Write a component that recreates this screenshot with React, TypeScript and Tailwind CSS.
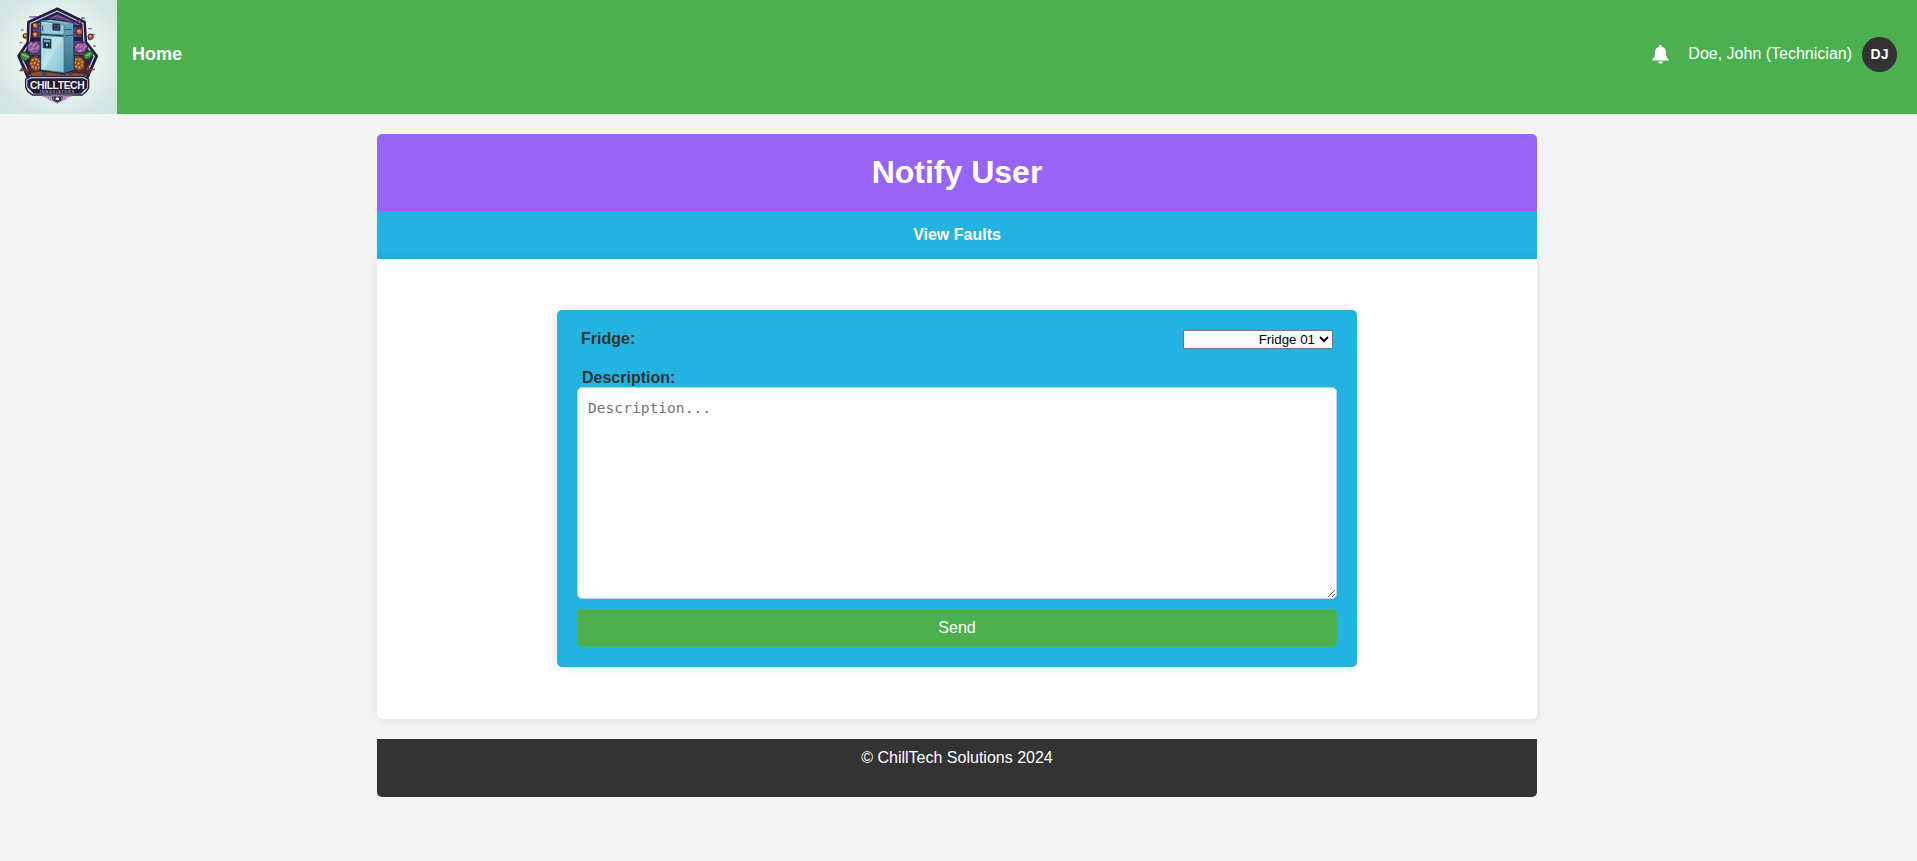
function Logo() {
  return (
    <svg viewBox="0 0 351 342" className="h-[114px] w-[117px] shrink-0" role="img">
      <defs>
        <radialGradient id="glow" cx="50%" cy="48%" r="68%">
          <stop offset="0" stopColor="#f5faf8" />
          <stop offset="0.55" stopColor="#e4f1ed" />
          <stop offset="0.85" stopColor="#d3e6e2" />
          <stop offset="1" stopColor="#cfe3df" />
        </radialGradient>
        <linearGradient id="door" x1="0" y1="0" x2="1" y2="1">
          <stop offset="0" stopColor="#a5d6de" />
          <stop offset="0.5" stopColor="#a9dae1" />
          <stop offset="1" stopColor="#83bfce" />
        </linearGradient>
        <linearGradient id="side" x1="0" y1="0" x2="0" y2="1">
          <stop offset="0" stopColor="#6ba6b9" />
          <stop offset="1" stopColor="#386d87" />
        </linearGradient>
      </defs>
      <rect width="351" height="342" fill="url(#glow)" />
      <g fill="#8c72a4">
        <path d="M88 48h22v5H88zM95 57h9v4h-9zM63 88h8v4h-8zM70 102h8v4h-8zM59 126h8v4h-8zM243 52h12v5h-12zM264 84h12v4h-12zM273 102h12v4h-12zM263 117h10v4h-10zM279 136h8v5h-8z" />
      </g>
      <path d="M172 25L255 65L259 125L292 168L262 237H84L54 168L82 127L84 65Z" fill="#271f43" stroke="#211b3b" strokeWidth="5" strokeLinejoin="round" />
      <path d="M172 33L249 70L252 128L283 169L256 230H91L63 169L89 129L91 70Z" fill="#2d2147" stroke="#b4c4d7" strokeWidth="4" />
      <path d="M172 43L242 75L244 130L260 165H88L99 130V77Z" fill="#634083" />
      <path d="M101 79L172 47L240 77" fill="none" stroke="#8d66a9" strokeWidth="3" />
      <path d="M93 112h31v12H89zM219 111h29v12h-29zM219 76h24v6h-24z" fill="#271b45" />
      <g fill="#bc6b2e" stroke="#321a35" strokeWidth="3">
        <circle cx="106" cy="77" r="9" /><circle cx="106" cy="104" r="9" />
        <circle cx="76" cy="108" r="7" /><circle cx="238" cy="65" r="6" />
        <circle cx="238" cy="95" r="10" /><circle cx="272" cy="110" r="8" />
      </g>
      <g fill="#f0a142">
        <circle cx="104" cy="75" r="4" /><circle cx="104" cy="102" r="4" />
        <circle cx="75" cy="106" r="3" /><circle cx="236" cy="93" r="4" /><circle cx="271" cy="108" r="3" />
      </g>
      <g fill="#8f5798" stroke="#3d2450" strokeWidth="3">
        <path d="M82 136l9-12 10 3 9-5 9 10 4 13-8 14-18 3-15-10zM222 139l12-13 10 3 12-3 7 14-6 14-16 7-19-8z" />
      </g>
      <path d="M88 136l7-6M99 140l6-8M108 146l9-7M91 149l9-4M228 141l8-6M240 143l6-8M250 145l8-8M235 154l11-4" stroke="#c286bf" strokeWidth="4" strokeLinecap="round" />
      <path d="M60 158q18-6 31 11q-13 22-27 6zM86 177q15-4 25-13l7 13-15 13zM222 165q17 2 23 15h-20zM250 166q13-18 31-9q-6 21-27 22z" fill="#3d8f3f" stroke="#183a2d" strokeWidth="3" />
      <path d="M66 163l21 9M228 169l11 7M257 168l14-7" stroke="#99c751" strokeWidth="4" />
      <path d="M76 211l18-11 30-3v29H80zM219 204l30-7 28 13-14 17h-45z" fill="#4d253b" />
      <g fill="#8d4d2b" stroke="#512b2a" strokeWidth="3">
        <path d="M103 169l15 4 9 16-4 17-14 9-15-7-7-15 6-19zM231 169l15 2 9 14-2 20-13 9-14-5-8-15 3-18z" />
      </g>
      <g fill="#dc8f3a">
        <circle cx="98" cy="180" r="3.500" /><circle cx="108" cy="178" r="3.500" /><circle cx="117" cy="184" r="3.500" />
        <circle cx="94" cy="190" r="3.500" /><circle cx="104" cy="189" r="3.500" /><circle cx="114" cy="194" r="3.500" />
        <circle cx="98" cy="200" r="3.500" /><circle cx="108" cy="203" r="3.500" /><circle cx="117" cy="203" r="3" />
        <circle cx="229" cy="178" r="3.500" /><circle cx="239" cy="179" r="3.500" /><circle cx="247" cy="186" r="3.500" />
        <circle cx="226" cy="188" r="3.500" /><circle cx="236" cy="190" r="3.500" /><circle cx="246" cy="196" r="3.500" />
        <circle cx="228" cy="199" r="3.500" /><circle cx="238" cy="202" r="3.500" />
      </g>
      <path d="M70 201l-8 10h25M266 195l-5 13h23" fill="none" stroke="#804222" strokeWidth="5" />
      <path d="M90 218L132 211L213 217L255 221L246 233H98Z" fill="#8c4c32" stroke="#48273c" strokeWidth="3" />
      <path d="M128 214v10h10v-8M184 219v12h11v-11M208 216v8h8v-10" fill="#2d5c73" stroke="#1b304e" strokeWidth="2" />
      <path d="M122 63L153 57L220 68L222 211L190 221L121 212Z" fill="#203853" stroke="#1c2747" strokeWidth="4" strokeLinejoin="round" />
      <path d="M191 73L220 69L221 210L191 219Z" fill="url(#side)" />
      <path d="M124 62L153 59L219 69L192 74Z" fill="#80b7c6" />
      <path d="M123 64L192 73V105L123 101Z" fill="#96cbd5" stroke="#3c7189" strokeWidth="2" />
      <path d="M123 106L192 110V218L123 209Z" fill="url(#door)" stroke="#3c7189" strokeWidth="2" />
      <path d="M161 110L187 112L134 208L125 207V183Z" fill="#c3e8eb" opacity="0.65" />
      <path d="M125 67l57 8M127 108v98" stroke="#c7e9ed" strokeWidth="3" />
      <path d="M157 70l24 2v21l-24-2z" fill="#223049" />
      <path d="M162 75h5v5h-5zM171 76h6v5h-6zM162 84h15v3h-15z" fill="#485b6c" />
      <path d="M128 115l26 2v29l-26-2z" fill="#243f5c" />
      <path d="M132 119l18 1v7l-18-1z" fill="#6ca7b9" />
      <path d="M135 130h12l3 13-17-1z" fill="#102942" />
      <path d="M138 131h6v8h-6z" fill="#8cc4d1" />
      <path d="M128 76v18M194 89h22M195 108l24-3" stroke="#2c526c" strokeWidth="3" />
      <path d="M91 230H253L266 238V264L258 275L246 285H98L84 275L77 263V238Z" fill="#e2e9ed" stroke="#29213f" strokeWidth="4" />
      <path d="M94 235H250L262 241V263L253 270L243 281H101L91 270L82 262V240Z" fill="#211b3b" />
      <text x="90" y="267" textLength="164" lengthAdjust="spacing" fill="#f1f1ee" fontFamily="Liberation Sans, sans-serif" fontWeight="700" fontSize="31">CHILLTECH</text>
      <text x="120" y="280" textLength="102" lengthAdjust="spacing" fill="#aaa3b5" fontFamily="Liberation Sans, sans-serif" fontWeight="700" fontSize="10">INNOVIATORS</text>
      <path d="M124 287H218L198 298L172 311L147 299Z" fill="#a88bb8" />
      <path d="M155 288H190L188 300L172 309L156 300Z" fill="#362849" stroke="#c5b9d0" strokeWidth="2" />
      <path d="M172 290l5 5v5h-10v-5z" fill="#f4eff6" />
      <path d="M131 289l14 8M211 289l-13 8M161 292v6M184 292v6" stroke="#e1d4e5" strokeWidth="2" />
    </svg>
  );
}

function Header() {
  return (
    <header className="flex h-[114px] items-start bg-[#4caf50] text-white">
      <Logo />
      <a href="#" className="mt-11 ml-[15px] text-[18px] leading-[21px] font-bold">Home</a>
      <div className="mt-[37px] mr-5 ml-auto flex h-[35px] items-center">
        <svg viewBox="0 0 17 19" className="mr-[19px] h-[19px] w-[17px]" fill="currentColor" aria-hidden="true">
          <path d="M8.5 0C7.8 0 7.3.5 7.3 1.2v.5C4.6 2.2 3 4.3 3 7c0 4.600-.8 6-2.600 7.300-.5.4-.4 1.200.4 1.200h15.400c.8 0 .9-.8.4-1.200C14.800 13 14 11.600 14 7c0-2.700-1.600-4.800-4.300-5.300v-.5C9.700.5 9.200 0 8.500 0zM6 16.500h5c-.2 1.300-1.100 2.100-2.500 2.100S6.200 17.800 6 16.500z" />
        </svg>
        <span className="mr-[10px] pb-0.5 leading-[18px]">Doe, John (Technician)</span>
        <span className="flex size-[35px] items-center justify-center rounded-full bg-[#333] text-[14px] font-bold">DJ</span>
      </div>
    </header>
  );
}

export default function App() {
  return (
    <div className="min-h-screen bg-[#f4f4f4] font-['Liberation_Sans',Arial,sans-serif] text-base text-[#333]">
      <Header />
      <div className="mt-5 ml-[377px] w-[1160px]">
        <div className="flex h-[77px] items-center justify-center rounded-t-[5px] bg-[#9764f7]">
          <h1 className="text-[32px] leading-[37px] font-bold text-white">Notify User</h1>
        </div>
        <nav className="flex h-12 items-center justify-center bg-[#22b3e0] font-bold text-white">
          <a href="#" className="leading-[18px]">View Faults</a>
        </nav>
        <main className="h-[460px] rounded-b-[5px] bg-white pt-[51px] shadow-[0_0_10px_rgba(0,0,0,0.1)]">
          <form className="mx-auto h-[357px] w-[800px] rounded-[5px] bg-[#22b3e0] p-5 shadow-[0_0_10px_rgba(0,0,0,0.1)]">
            <div className="flex h-[19px] items-start justify-between pr-1 pl-1">
              <label htmlFor="fridge" className="font-bold leading-[18px]">Fridge:</label>
              <select id="fridge" className="h-[19px] w-[150px] rounded-none border border-[#767676] bg-white pr-px text-right text-[13.333px] text-black">
                <option>Fridge 01</option>
              </select>
            </div>
            <label htmlFor="description" className="mt-5 ml-[5px] block font-bold leading-[18px]">Description:</label>
            <textarea
              id="description"
              placeholder="Description..."
              className="block h-[212px] w-full resize rounded-[5px] border border-[#ccc] bg-white p-[10px] font-['DejaVu_Sans_Mono',monospace] text-[14.6px] leading-[19px] placeholder:text-[#757575]"
            />
            <button type="button" className="mt-[10px] block h-[38px] w-full rounded-[5px] bg-[#4caf50] text-white">Send</button>
          </form>
        </main>
        <footer className="mt-5 h-[58px] rounded-b-[5px] bg-[#333] pt-[10px] text-center leading-[18px] text-white">
          © ChillTech Solutions 2024
        </footer>
      </div>
    </div>
  );
}
